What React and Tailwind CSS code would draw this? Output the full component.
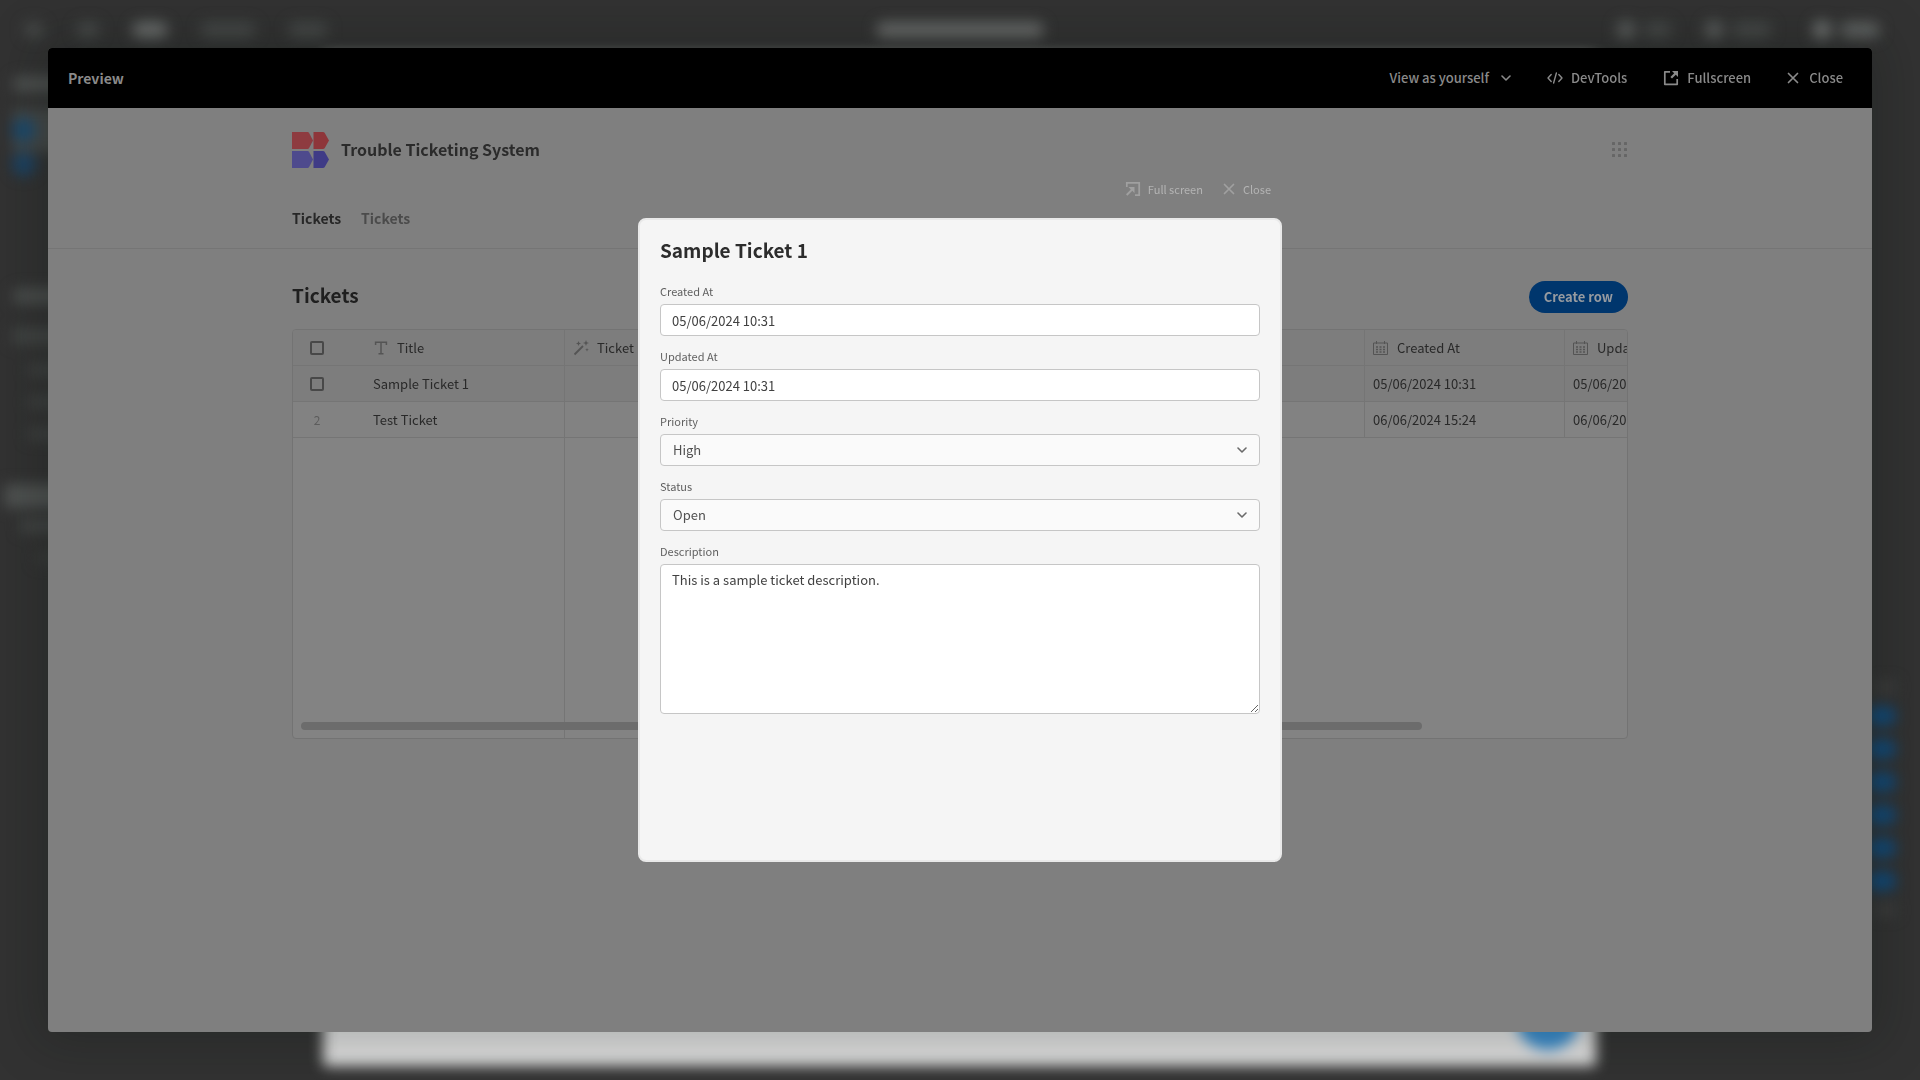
import { useState } from "react";

const columns = [
  { label: "Ticket ID", icon: "formula" },
  { label: "Priority", icon: "text" },
  { label: "Status", icon: "text" },
  { label: "Description", icon: "text" },
  { label: "Created At", icon: "date" },
  { label: "Updated At", icon: "date" },
];

const rows = [
  {
    id: 1,
    title: "Sample Ticket 1",
    cells: ["", "High", "Open", "", "05/06/2024 10:31", "05/06/2024 10:31"],
  },
  {
    id: 2,
    title: "Test Ticket",
    cells: ["", "Low", "Open", "", "06/06/2024 15:24", "06/06/2024 15:24"],
  },
];

function ChevronDown({ className }) {
  return (
    <svg viewBox="0 0 10 6" fill="none" className={className}>
      <path
        d="M1 1l4 4 4-4"
        stroke="currentColor"
        strokeWidth="1.6"
        strokeLinecap="round"
        strokeLinejoin="round"
      />
    </svg>
  );
}

function CloseIcon({ className }) {
  return (
    <svg viewBox="0 0 12 12" fill="none" className={className}>
      <path
        d="M1.5 1.5l9 9M10.5 1.5l-9 9"
        stroke="currentColor"
        strokeWidth="1.7"
        strokeLinecap="round"
      />
    </svg>
  );
}

function CodeIcon({ className }) {
  return (
    <svg viewBox="0 0 16 12" fill="none" className={className}>
      <path
        d="M4.2 2.5L1 6l3.2 3.5M11.8 2.5L15 6l-3.2 3.5M9.4 1L6.6 11"
        stroke="currentColor"
        strokeWidth="1.4"
        strokeLinecap="round"
        strokeLinejoin="round"
      />
    </svg>
  );
}

function LinkOutIcon({ className }) {
  return (
    <svg viewBox="0 0 16 16" fill="none" className={className}>
      <path
        d="M7 1.8H1.8v12.5h12.4V9"
        stroke="currentColor"
        strokeWidth="1.7"
        strokeLinejoin="round"
      />
      <path d="M9 1h6v6l-2.2-2.2L9 8.6 7.4 7l3.8-3.8z" fill="currentColor" />
    </svg>
  );
}

function FullScreenIcon({ className }) {
  return (
    <svg viewBox="0 0 16 16" fill="none" className={className}>
      <path
        d="M1.8 6V1.8h12.4v12.4H10"
        stroke="currentColor"
        strokeWidth="1.7"
      />
      <path d="M3.5 6h6v6L7.3 9.8 2.4 14.7 1 13.3l4.8-4.9z" fill="currentColor" />
    </svg>
  );
}

function GridDots() {
  return (
    <svg viewBox="0 0 16 16" fill="currentColor" className="size-4">
      {[0, 6, 12].map((y) =>
        [0, 6, 12].map((x) => (
          <rect key={`${x}-${y}`} x={x} y={y} width="3" height="3" rx="0.6" />
        )),
      )}
    </svg>
  );
}

function Logo() {
  return (
    <svg viewBox="0 0 37 36" className="h-9 w-[37px]" aria-label="Logo">
      <path d="M0 0h15.5q1 0 1.5.8l4 7.7-4 7.7q-.5.8-1.5.8H0z" fill="#8e3b40" />
      <path d="M21.5 0H31q1 0 1.6.8L37 8.5l-4.4 7.7q-.6.8-1.6.8h-9.5z" fill="#8e363a" />
      <path d="M0 19h15.5q1 0 1.5.8l4 7.700-4 7.700q-.5.8-1.5.8H0z" fill="#4e4a8d" />
      <path d="M21.5 19H31q1 0 1.6.8l4.4 7.7-4.4 7.7q-.6.8-1.6.8h-9.5z" fill="#3f3b86" />
    </svg>
  );
}

function ColumnIcon({ type }) {
  if (type === "text") {
    return (
      <svg viewBox="0 0 16 16" fill="none" className="size-4 shrink-0">
        <path
          d="M2.6 5V2.2h10.8V5M8 2.2v11.6M5.5 13.8h5"
          stroke="currentColor"
          strokeWidth="1.5"
        />
      </svg>
    );
  }
  if (type === "formula") {
    return (
      <svg viewBox="0 0 16 16" className="size-4 shrink-0">
        <path d="M1.5 14.5L10 6" stroke="currentColor" strokeWidth="1.8" />
        <path
          d="M5.5 1l.7 1.8 1.8.7-1.8.7L5.5 6l-.7-1.8L3 3.5l1.8-.7zM13 0l.8 2.2L16 3l-2.2.8L13 6l-.8-2.2L10 3l2.2-.8zM14 8l.5 1.3 1.3.5-1.3.5-.5 1.300-.5-1.300-1.300-.5 1.300-.5z"
          fill="currentColor"
        />
      </svg>
    );
  }
  return (
    <svg viewBox="0 0 16 16" fill="none" className="size-4 shrink-0">
      <path
        d="M.5 3h14v11.5H.5zM3.5 1v3M11.5 1v3"
        stroke="currentColor"
        strokeWidth="1"
      />
      <path
        d="M3 7h2M6.5 7h2M10 7h2M3 9.5h2M6.5 9.5h2M10 9.5h2M3 12h2M6.5 12h2M10 12h2"
        stroke="currentColor"
        strokeWidth="1.5"
      />
    </svg>
  );
}

/* App builder sitting out of focus behind the preview */
function BuilderBackdrop() {
  return (
    <div
      aria-hidden="true"
      className="fixed inset-0 overflow-hidden bg-[#323232]"
    >
      <div className="flex h-full flex-col blur-[7px]">
        <div className="flex h-14 shrink-0 items-center px-6 pt-1">
          <div className="flex flex-1 items-center gap-8">
            <div className="h-4 w-5 rounded-full bg-[#474a49]" />
            <div className="h-4 w-6 rounded-full bg-[#474a49]" />
            <div className="h-4 w-9 rounded-full bg-[#6a6d6c]" />
            <div className="h-4 w-14 rounded-full bg-[#454847]" />
            <div className="h-4 w-10 rounded-full bg-[#454847]" />
          </div>
          <div className="ml-4 h-4 w-42 rounded-full bg-[#676968]" />
          <div className="flex flex-1 items-center justify-end gap-2 pr-4">
            <div className="size-5 rounded-full bg-[#585b5a]" />
            <div className="mr-6 h-4 w-7 rounded-full bg-[#454847]" />
            <div className="size-5 rounded-full bg-[#585b5a]" />
            <div className="mr-8 h-4 w-10 rounded-full bg-[#454847]" />
            <div className="size-5 rounded-full bg-[#6c6f6e]" />
            <div className="h-4 w-10 rounded-full bg-[#5f6261]" />
          </div>
        </div>
        <div className="flex min-h-0 flex-1">
          <div className="flex w-[323px] flex-col pl-3 pt-5">
            <div className="h-4 w-24 rounded-full bg-[#4f5251]" />
            <div className="mt-4 flex h-11 items-center bg-[#454847]">
              <div className="size-6 rounded-full bg-[#1c4a6d]" />
            </div>
            <div className="size-6 rounded-full bg-[#1c4364]" />
            <div className="mt-28 h-4 w-24 rounded-full bg-[#4b4e4d]" />
            <div className="mt-6 h-4 w-24 bg-[#424544]" />
            <div className="ml-4 mt-5 h-3 w-24 bg-[#3f4241]" />
            <div className="ml-4 mt-5 h-3 w-24 bg-[#3f4241]" />
            <div className="ml-4 mt-5 h-3 w-24 bg-[#3f4241]" />
            <div className="-ml-2 mt-11 h-6 w-24 bg-[#4f5251]" />
            <div className="ml-2 mt-3 h-3 w-24 bg-[#454847]" />
            <div className="ml-6 mt-5 h-3 w-24 bg-[#393b3a]" />
          </div>
          <div className="mb-3.5 flex flex-1 items-end justify-end rounded bg-[#dedede] pb-4 pr-4">
            <div className="size-16 rounded-full bg-[#3a8bcb]" />
          </div>
          <div className="flex w-[324px] flex-col items-end justify-end gap-[13px] pb-[164px] pr-6">
            <div className="h-3 w-5 bg-[#3d3e3e]" />
            <div className="h-5 w-7 rounded-full bg-[#104a7a]" />
            <div className="h-5 w-7 rounded-full bg-[#104a7a]" />
            <div className="h-5 w-7 rounded-full bg-[#104a7a]" />
            <div className="h-5 w-7 rounded-full bg-[#104a7a]" />
            <div className="h-5 w-7 rounded-full bg-[#104a7a]" />
            <div className="h-5 w-7 rounded-full bg-[#104a7a]" />
            <div className="h-3 w-5 bg-[#3d3e3e]" />
          </div>
        </div>
      </div>
    </div>
  );
}

function PreviewBar() {
  return (
    <header className="flex h-[60px] shrink-0 items-center justify-between bg-black pl-5 pr-[29px] text-[13px] font-medium text-[#8a8a8a]">
      <h1 className="text-sm font-bold">Preview</h1>
      <div className="flex items-center">
        <button className="mr-9 flex items-center gap-3">
          View as yourself
          <ChevronDown className="h-1.5 w-2.5" />
        </button>
        <button className="mr-9 flex items-center gap-2">
          <CodeIcon className="h-3 w-4" />
          DevTools
        </button>
        <button className="mr-9 flex items-center gap-2">
          <LinkOutIcon className="size-4" />
          Fullscreen
        </button>
        <button className="flex items-center gap-2.5">
          <CloseIcon className="size-3" />
          Close
        </button>
      </div>
    </header>
  );
}

function AppHeader() {
  return (
    <div className="border-b border-[#757575]">
      <div className="mx-auto max-w-[1400px] px-8 pt-6">
        <div className="flex items-center justify-between">
          <div className="flex items-center gap-3">
            <Logo />
            <h2 className="pb-0.5 text-base/8 font-bold text-[#2b2b2b]">
              Trouble Ticketing System
            </h2>
          </div>
          <button aria-label="Apps" className="text-[#666666]">
            <GridDots />
          </button>
        </div>
        <nav className="mb-[18px] mt-[38px] flex gap-5 text-sm/6 font-bold">
          <a href="#tickets" className="text-[#272727]">
            Tickets
          </a>
          <a href="#tickets-list" className="text-[#4b4b4b]">
            Tickets
          </a>
        </nav>
      </div>
    </div>
  );
}

function TicketsTable() {
  const cell = "border-b border-r border-[#757575] px-2";

  return (
    <div className="relative flex h-[410px] flex-col overflow-hidden rounded border border-[#737373] bg-[#838383]">
      <table className="w-[1472px] shrink-0 table-fixed border-separate border-spacing-0 text-left text-[13px] text-[#292929]">
        <colgroup>
          <col className="w-[72px]" />
          <col className="w-[200px]" />
          {columns.map((col) => (
            <col key={col.label} className="w-[200px]" />
          ))}
        </colgroup>
        <thead>
          <tr className="h-9 bg-[#7d7d7d]">
            <th className="border-b border-[#757575] pl-[17px]">
              <input
                type="checkbox"
                aria-label="Select all rows"
                className="block size-3.5 appearance-none rounded-xs border-2 border-[#484848]"
              />
            </th>
            <th className={`${cell} font-normal`}>
              <div className="flex items-center gap-2">
                <span className="text-[#545454]">
                  <ColumnIcon type="text" />
                </span>
                Title
              </div>
            </th>
            {columns.map((col) => (
              <th key={col.label} className={`${cell} font-normal`}>
                <div className="flex items-center gap-2">
                  <span className="text-[#545454]">
                    <ColumnIcon type={col.icon} />
                  </span>
                  {col.label}
                </div>
              </th>
            ))}
          </tr>
        </thead>
        <tbody>
          {rows.map((row) => (
            <tr
              key={row.id}
              className={`h-9 ${row.id === 1 ? "bg-[#7d7d7d]" : "bg-[#828282]"}`}
            >
              <td className="border-b border-[#757575] pl-[17px]">
                {row.id === 1 ? (
                  <input
                    type="checkbox"
                    aria-label={`Select ${row.title}`}
                    className="block size-3.5 appearance-none rounded-xs border-2 border-[#484848]"
                  />
                ) : (
                  <span className="block w-3.5 text-center text-xs text-[#5c5c5c]">
                    {row.id}
                  </span>
                )}
              </td>
              <td className={cell}>{row.title}</td>
              {row.cells.map((value, i) => (
                <td key={columns[i].label} className={cell}>
                  {value}
                </td>
              ))}
            </tr>
          ))}
        </tbody>
      </table>
      <div className="w-[272px] flex-1 border-r border-[#757575]" />
      {/* Horizontal scrollbar */}
      <div className="absolute bottom-2 left-2 h-2 w-[84%] rounded-full bg-[#6c6c6c]" />
    </div>
  );
}

function Field({ id, label, children }) {
  return (
    <div className="flex flex-col">
      <label htmlFor={id} className="pb-[3px] text-[11px]/5 text-[#5f5f5f]">
        {label}
      </label>
      {children}
    </div>
  );
}

function TextField({ id, label, defaultValue }) {
  return (
    <Field id={id} label={label}>
      <input
        id={id}
        type="text"
        defaultValue={defaultValue}
        className="h-8 rounded border border-[#c6c6c6] bg-white px-[11px] text-[13px] text-[#414141]"
      />
    </Field>
  );
}

function SelectField({ id, label, options, value, onChange }) {
  return (
    <Field id={id} label={label}>
      <div className="relative flex">
        <select
          id={id}
          value={value}
          onChange={(e) => onChange(e.target.value)}
          className="h-8 w-full appearance-none rounded border border-[#c6c6c6] bg-[#fafafa] px-3 text-[13px] text-[#505050]"
        >
          {options.map((option) => (
            <option key={option}>{option}</option>
          ))}
        </select>
        <ChevronDown className="pointer-events-none absolute right-[13px] top-[13px] h-1.5 w-2.5 text-[#6a6a6a]" />
      </div>
    </Field>
  );
}

function TicketModal() {
  const [priority, setPriority] = useState("High");
  const [status, setStatus] = useState("Open");

  return (
    <div className="fixed inset-0 flex flex-col items-center justify-center pb-14">
      <div className="flex h-14 w-full max-w-[644px] items-center justify-end gap-5 pb-0.5 pr-[11px] text-[11px] text-[#b4b4b4]">
        <button className="flex items-center gap-[7px]">
          <FullScreenIcon className="size-4 text-[#a0a0a0]" />
          Full screen
        </button>
        <button className="flex items-center gap-2">
          <CloseIcon className="size-3 text-[#a0a0a0]" />
          Close
        </button>
      </div>
      <div
        role="dialog"
        aria-labelledby="ticket-title"
        className="flex min-h-[644px] w-full max-w-[644px] flex-col rounded-lg border-2 border-[#e9e9e9] bg-[#f5f5f5] px-5 pt-4"
      >
        <h2
          id="ticket-title"
          className="mb-[17px] text-[19px]/7 font-bold text-[#2c2c2c]"
        >
          Sample Ticket 1
        </h2>
        <form className="flex flex-col gap-2.5">
          <TextField
            id="created-at"
            label="Created At"
            defaultValue="05/06/2024 10:31"
          />
          <TextField
            id="updated-at"
            label="Updated At"
            defaultValue="05/06/2024 10:31"
          />
          <SelectField
            id="priority"
            label="Priority"
            options={["High", "Medium", "Low"]}
            value={priority}
            onChange={setPriority}
          />
          <SelectField
            id="status"
            label="Status"
            options={["Open", "In Progress", "Closed"]}
            value={status}
            onChange={setStatus}
          />
          <Field id="description" label="Description">
            <textarea
              id="description"
              defaultValue="This is a sample ticket description."
              className="h-[150px] rounded border border-[#c6c6c6] bg-white px-[11px] py-[5px] text-[13px]/5 text-[#414141]"
            />
          </Field>
        </form>
      </div>
    </div>
  );
}

export default function App() {
  return (
    <div className="font-['Noto_Sans_CJK_SC',sans-serif]">
      <BuilderBackdrop />
      <div className="relative flex min-h-screen p-12">
        <div className="flex min-w-0 flex-1 flex-col overflow-hidden rounded bg-[#7f7f7f] shadow-[0_0_50px_10px_rgba(10,20,16,0.25)]">
          <PreviewBar />
          <AppHeader />
          <main className="mx-auto w-full max-w-[1400px] px-8 pt-8">
            <div className="mb-4 flex items-start justify-between">
              <h2 className="text-[19px]/7 font-bold text-[#1f1f1f]">
                Tickets
              </h2>
              <button className="h-8 rounded-full bg-[#00366d] px-[15px] text-[13px] font-bold text-[#979ba0]">
                Create row
              </button>
            </div>
            <TicketsTable />
          </main>
        </div>
      </div>
      <TicketModal />
    </div>
  );
}
